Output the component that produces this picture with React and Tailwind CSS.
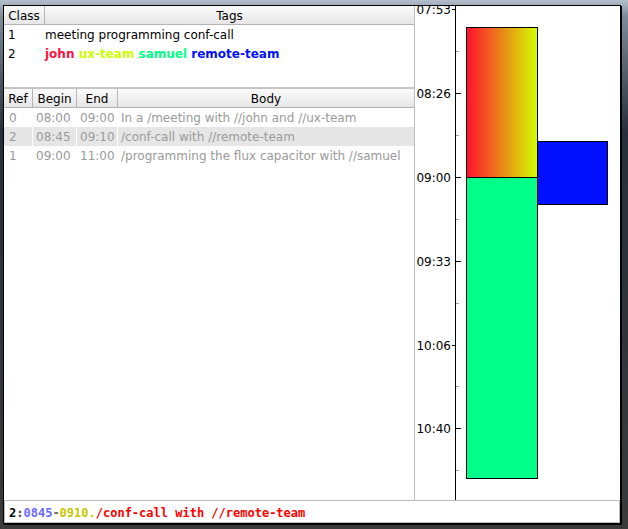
import React from 'react';

// --- data ---
const classes = [
    { id: 1, text: 'meeting programming conf-call', plain: true },
    {
        id: 2,
        tags: [
            { name: 'john', color: 'text-[#ff1040]' },
            { name: 'ux-team', color: 'text-[#ccff00]' },
            { name: 'samuel', color: 'text-[#00ff88]' },
            { name: 'remote-team', color: 'text-[#0010ff]' },
        ],
    },
];

const entries = [
    { ref: 0, begin: '08:00', end: '09:00', body: 'In a /meeting with //john and //ux-team' },
    { ref: 2, begin: '08:45', end: '09:10', body: '/conf-call with //remote-team', selected: true },
    { ref: 1, begin: '09:00', end: '11:00', body: '/programming the flux capacitor with //samuel' },
];

const headerCls =
    'h-[19px] pt-[2px] flex items-center justify-center border-r border-b border-[#b4b4b4] bg-[linear-gradient(#fbfbfb,#e6e6e6)] text-black';

// --- chart ---
const Timeline = () => {
    const major = ['07:53', '08:26', '09:00', '09:33', '10:06', '10:40'];
    const step = 83.8;
    const y0 = 3.3;
    return (
        <svg width="205" height="494" className="block">
            {/* bars */}
            <defs>
                <linearGradient id="g1" x1="0" x2="1" y1="0" y2="0">
                    <stop offset="0" stopColor="#ff1030" />
                    <stop offset="1" stopColor="#d4ff00" />
                </linearGradient>
            </defs>
            <rect x="51.5" y="21.5" width="71" height="150" fill="url(#g1)" stroke="#000" />
            <rect x="51.5" y="171.5" width="71" height="301" fill="#00ff88" stroke="#000" />
            <rect x="122.5" y="135.5" width="70" height="63" fill="#0010ff" stroke="#000" />

            {/* axis */}
            <line x1="40.5" y1="0" x2="40.5" y2="494" stroke="#000" />
            {major.map((t, i) => {
                const y = Math.round(y0 + step * i) + 0.5;
                const left = i % 2 === 0 && i !== 2;
                return (
                    <g key={t}>
                        <line
                            x1={left ? 37 : 40}
                            x2={left ? 41 : 46}
                            y1={y}
                            y2={y}
                            stroke="#000"
                        />
                        <text
                            x="36"
                            y={y + 4.5}
                            textAnchor="end"
                            fontFamily="'DejaVu Sans', sans-serif"
                            fontSize="12"
                            fill="#000"
                        >
                            {t}
                        </text>
                    </g>
                );
            })}
            {major.map((t, i) => {
                const y = Math.round(y0 + step * i + step / 2) + 0.5;
                return <line key={'m' + t} x1="41" x2="44" y1={y} y2={y} stroke="#a0a0a0" />;
            })}
        </svg>
    );
};

export default function App() {
    return (
        <div
            className="w-[628px] h-[529px] overflow-hidden bg-[linear-gradient(#b3bfcc_0%,#7d8b9a_3%,#27303a_25%,#30343a_60%,#3a3a3a_100%)] pt-[5px] pl-[3px]"
            style={{ fontFamily: "'DejaVu Sans', sans-serif" }}
        >
            <div className="w-[618px] h-[519px] border border-black bg-white flex flex-col text-[12px] shadow-[1px_1px_0_#000]">
                <div className="flex h-[494px]">
                    {/* left panel */}
                    <div className="w-[411px] flex flex-col border-r border-[#bdbdbd]">
                        {/* classes table */}
                        <div className="h-[81px]">
                            <div className="flex">
                                <div className={headerCls + ' w-[41px]'}>Class</div>
                                <div className={headerCls + ' flex-1 border-r-0'}>Tags</div>
                            </div>
                            {classes.map(c => (
                                <div key={c.id} className="flex h-[19px] items-center">
                                    <div className="w-[41px] pl-[4px]">{c.id}</div>
                                    <div className="flex-1 whitespace-nowrap">
                                        {c.plain
                                            ? c.text
                                            : c.tags.map((t, i) => (
                                                  <span key={t.name} className={'font-bold ' + t.color}>
                                                      {t.name}
                                                      {i < c.tags.length - 1 ? ' ' : ''}
                                                  </span>
                                              ))}
                                    </div>
                                </div>
                            ))}
                        </div>
                        <div className="h-[2px] bg-[#c4c4c4]" />

                        {/* entries table */}
                        <div className="flex-1">
                            <div className="flex">
                                <div className={headerCls + ' w-[29px]'}>Ref</div>
                                <div className={headerCls + ' w-[44px]'}>Begin</div>
                                <div className={headerCls + ' w-[41px]'}>End</div>
                                <div className={headerCls + ' flex-1 border-r-0'}>Body</div>
                            </div>
                            {entries.map(e => (
                                <div
                                    key={e.ref}
                                    className={
                                        'flex h-[19px] text-[#9a9a9a] ' +
                                        (e.selected ? 'bg-[#e6e6e6]' : '')
                                    }
                                >
                                    <div className="w-[29px] pl-[5px] flex items-center border-r border-white">{e.ref}</div>
                                    <div className="w-[44px] pl-[3px] flex items-center border-r border-white">{e.begin}</div>
                                    <div className="w-[41px] pl-[3px] flex items-center border-r border-white">{e.end}</div>
                                    <div className="flex-1 pl-[3px] flex items-center whitespace-nowrap">{e.body}</div>
                                </div>
                            ))}
                        </div>
                    </div>

                    {/* right panel: timeline */}
                    <div className="flex-1 overflow-hidden">
                        <Timeline />
                    </div>
                </div>

                {/* status line */}
                <div
                    className="h-[23px] border border-[#bdbdbd] flex items-center pl-[4px] pt-[3px] font-bold text-[12px] whitespace-pre"
                    style={{ fontFamily: "'DejaVu Sans Mono', monospace" }}
                >
                    <span className="text-black">2</span>
                    <span className="text-[#444]">:</span>
                    <span className="text-[#6b6bff]">0845</span>
                    <span className="text-[#666]">-</span>
                    <span className="text-[#c8c800]">0910.</span>
                    <span className="text-[#ff0000]">/conf-call with //remote-team</span>
                </div>
            </div>
        </div>
    );
}
